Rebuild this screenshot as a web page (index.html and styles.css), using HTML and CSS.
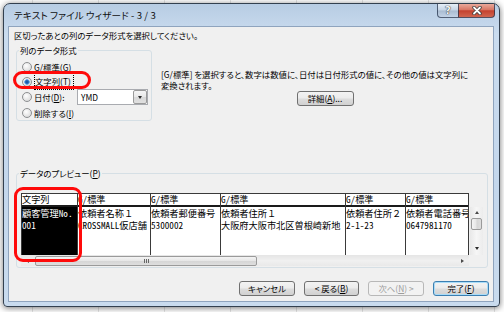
FILE: index.html
```html
<!DOCTYPE html>
<html lang="ja">
<head>
    <meta charset="UTF-8">
    <meta name="viewport" content="width=device-width, initial-scale=1.0">
    <title>テキスト ファイル ウィザード - 3 / 3</title>
    <link rel="stylesheet" href="styles.css">
</head>
<body>
<div class="desk">
    <!-- Dialog window -->
    <div class="window">
        <div class="titlebar">
            <span class="title">テキスト ファイル ウィザード - 3 / 3</span>
            <div class="caption-btns">
                <span class="cap-btn help">?</span>
                <span class="cap-btn close">
                    <svg width="10" height="9" viewBox="0 0 10 9">
                        <path d="M2 1.5 L8 7.5 M8 1.5 L2 7.5" stroke="#3b3b3b" stroke-width="3.4" stroke-linecap="round"/>
                        <path d="M2 1.5 L8 7.5 M8 1.5 L2 7.5" stroke="#fff" stroke-width="1.8" stroke-linecap="round"/>
                    </svg>
                </span>
            </div>
        </div>

        <div class="client">
            <p class="lead">区切ったあとの列のデータ形式を選択してください。</p>

            <div class="format-row">
                <fieldset class="group format">
                    <legend>列のデータ形式</legend>
                    <label class="opt"><span class="radio"></span>G/標準(<u>G</u>)</label>
                    <label class="opt"><span class="radio on"></span><span class="focus">文字列(<u>T</u>)</span></label>
                    <label class="opt date"><span class="radio"></span>日付(<u>D</u>):
                        <span class="combo">YMD<span class="drop"><i class="tri-down"></i></span></span>
                    </label>
                    <label class="opt"><span class="radio"></span>削除する(<u>I</u>)</label>
                </fieldset>
                <div class="hint">
                    <p>[G/標準] を選択すると、数字は数値に、日付は日付形式の値に、その他の値は文字列に<br>変換されます。</p>
                    <button class="btn detail">詳細(<u>A</u>)...</button>
                </div>
            </div>

            <!-- Preview -->
            <fieldset class="group preview-group">
                <legend>データのプレビュー(<u>P</u>)</legend>
                <div class="preview">
                    <div class="grid-area">
                        <div class="grid">
                            <div class="col c1 sel">
                                <div class="hd">文字列</div>
                                <div class="cell">顧客管理No.</div>
                                <div class="cell">001</div>
                            </div>
                            <div class="col c2">
                                <div class="hd">G/標準</div>
                                <div class="cell">依頼者名称１</div>
                                <div class="cell">CROSSMALL仮店舗</div>
                            </div>
                            <div class="col c3">
                                <div class="hd">G/標準</div>
                                <div class="cell">依頼者郵便番号</div>
                                <div class="cell">5300002</div>
                            </div>
                            <div class="col c4">
                                <div class="hd">G/標準</div>
                                <div class="cell">依頼者住所１</div>
                                <div class="cell">大阪府大阪市北区曽根崎新地</div>
                            </div>
                            <div class="col c5">
                                <div class="hd">G/標準</div>
                                <div class="cell">依頼者住所２</div>
                                <div class="cell">2-1-23</div>
                            </div>
                            <div class="col c6">
                                <div class="hd">G/標準</div>
                                <div class="cell">依頼者電話番号</div>
                                <div class="cell">0647981170</div>
                            </div>
                        </div>
                        <div class="hscroll">
                            <span class="arrow"><i class="tri-left"></i></span>
                            <span class="thumb h-thumb"><i class="grip"></i></span>
                            <span class="arrow right"><i class="tri-right"></i></span>
                        </div>
                    </div>
                    <div class="vscroll">
                        <span class="arrow up"><i class="tri-up"></i></span>
                        <span class="thumb v-thumb"></span>
                        <span class="arrow down"><i class="tri-down"></i></span>
                    </div>
                </div>
            </fieldset>

            <div class="buttons">
                <button class="btn">キャンセル</button>
                <button class="btn">&lt; 戻る(<u>B</u>)</button>
                <button class="btn" disabled>次へ(<u>N</u>) &gt;</button>
                <button class="btn default">完了(<u>F</u>)</button>
            </div>
        </div>
    </div>

    <!-- Red annotation marks -->
    <div class="mark mark-type"></div>
    <div class="mark mark-col"></div>
</div>
</body>
</html>
```

FILE: styles.css
```css
/* General */
* {
    box-sizing: border-box;
}
body {
    margin: 0;
    font-family: "Noto Sans CJK JP", sans-serif;
    font-size: 8.4px;
    font-feature-settings: "palt";
    color: #000;
    background-color: #fff;
    background-image: linear-gradient(90deg, #e4e4e4 1px, transparent 1px);
    background-size: 66px 100%;
    background-position: 32px 0;
}
u {
    text-decoration: underline;
    text-underline-offset: 1px;
}
.desk {
    position: relative;
    width: 504px;
    height: 312px;
    padding: 3px 4px 5px 3px;
}

/* Window frame */
.window {
    height: 304px;
    border: 1px solid #33404f;
    border-radius: 7px 7px 4px 4px;
    background: linear-gradient(180deg, #b7cce3 0%, #cadcef 10%, #c4d7ec 60%, #c9dbee 100%);
    padding: 0 5px 4px 4px;
    display: flex;
    flex-direction: column;
    box-shadow: 0 1px 6px rgba(0, 0, 0, 0.55);
}
.titlebar {
    height: 22px;
    display: flex;
    align-items: center;
    padding-left: 6px;
}
.title {
    font-size: 9.6px;
    color: #101010;
    letter-spacing: 0.1px;
}
.caption-btns {
    margin-left: auto;
    margin-right: -1px;
    align-self: flex-start;
    display: flex;
}
.cap-btn {
    height: 14px;
    display: flex;
    align-items: center;
    justify-content: center;
    border: 1px solid rgba(35, 50, 75, 0.75);
    border-top: none;
}
.help {
    width: 21px;
    border-right: none;
    border-radius: 0 0 0 4px;
    background: linear-gradient(180deg, #e6eef7 0%, #c5d4e5 48%, #a9bbd0 52%, #c3d3e6 100%);
    color: #f4f4f4;
    font-family: "DejaVu Sans", sans-serif;
    font-weight: bold;
    font-size: 10px;
    text-shadow: 0 0 1px #333, 0 0 1px #333;
}
.close {
    width: 37px;
    border-radius: 0 0 4px 0;
    background: linear-gradient(180deg, #e9a99b 0%, #d87664 45%, #c4412e 52%, #d0654f 100%);
}

/* Client area */
.client {
    flex: 1;
    background: #f0f0f0;
    border: 1px solid #8fa4be;
    padding: 3px 4px 0 7px;
    display: flex;
    flex-direction: column;
}
.lead {
    margin: 0 0 0 -2px;
    line-height: 11px;
    height: 11px;
}
.format-row {
    display: flex;
    margin-top: 4px;
}

/* Group boxes */
.group {
    margin: 0;
    border: 1px solid #d5dfe5;
    border-radius: 3px;
    min-width: 0;
}
.group legend {
    padding: 0 1px;
    line-height: 11px;
}
.format {
    width: 136px;
    flex: none;
    padding: 3px 3px 0 5px;
}
.format legend {
    margin-left: -3px;
}
.opt {
    display: flex;
    align-items: center;
    height: 15px;
}
.opt.date {
    height: 16px;
}
.radio {
    width: 10px;
    height: 10px;
    flex: none;
    border-radius: 50%;
    border: 1px solid #8d8f91;
    background: radial-gradient(circle at 40% 35%, #ffffff 0%, #e4e4e4 60%, #d0d0d0 100%);
    margin-right: 2px;
}
.radio.on {
    background: radial-gradient(circle at 50% 50%, #15498f 0, #2c6fc0 1.6px, #7db4ea 2.6px, transparent 3px),
                radial-gradient(circle at 40% 35%, #ffffff 0%, #e4e4e4 60%, #d0d0d0 100%);
}
.focus {
    border: 1px dotted #000;
    padding: 2px 2px 2px 0;
    line-height: 11px;
}
.combo {
    margin-left: auto;
    width: 71px;
    height: 16px;
    border: 1px solid #a9abb0;
    background: #fff;
    display: flex;
    align-items: center;
    padding-left: 3px;
}
.drop {
    margin-left: auto;
    width: 14px;
    height: 14px;
    border: 1px solid #9a9a9a;
    border-radius: 2px;
    background: linear-gradient(180deg, #f5f5f5 0%, #e8e8e8 50%, #d8d8d8 51%, #e0e0e0 100%);
    display: flex;
    align-items: center;
    justify-content: center;
}
.hint {
    flex: 1;
    padding: 24px 0 0 9px;
    display: flex;
    flex-direction: column;
    align-items: center;
}
.hint p {
    align-self: flex-start;
    margin: 0;
    line-height: 11px;
    white-space: nowrap;
}

/* Buttons */
.btn {
    height: 15px;
    width: 56px;
    padding: 0;
    font: inherit;
    line-height: 13px;
    color: #000;
    border: 1px solid #707070;
    border-radius: 3px;
    background: linear-gradient(180deg, #f3f3f3 0%, #ebebeb 48%, #dddddd 52%, #d1d1d1 100%);
}
.btn.detail {
    width: 57px;
}
.btn:disabled {
    color: #9d9d9d;
    border-color: #b8b8b8;
    background: #f2f2f2;
}
.btn.default {
    border-color: #3c7fb1;
    box-shadow: inset 0 0 0 1px #a9dcf8;
}
.buttons {
    display: flex;
    justify-content: flex-end;
    gap: 9px;
    margin-top: 13px;
}
.buttons .btn:nth-child(2) {
    width: 55px;
}

/* Preview grid */
.preview-group {
    margin: 47px 1px 0 0;
    padding: 14px 4px 1px 4px;
}
.preview-group legend {
    margin-left: -2px;
}
.preview {
    display: flex;
    height: 73px;
}
.grid-area {
    width: 448px;
    display: flex;
    flex-direction: column;
}
.grid {
    height: 62px;
    display: flex;
    overflow-x: clip;
    background: #fff;
    border-top: 1px solid #3a3a3a;
    border-left: 1px solid #3a3a3a;
    font-family: "Noto Sans Mono CJK JP", "Noto Sans CJK JP", monospace;
    font-size: 9.2px;
    font-feature-settings: normal;
}
.col {
    flex: none;
    overflow-x: clip;
    white-space: nowrap;
    border-right: 1px solid #3a3a3a;
}
.hd {
    height: 13px;
    line-height: 11px;
    background: #fff;
    border-bottom: 2px solid #1a1a1a;
}
.cell {
    height: 12px;
    line-height: 12px;
}
.sel {
    background: #000;
    color: #fff;
}
.sel .hd {
    color: #000;
}
.c1 { width: 56px; }
.c2 { width: 73px; }
.c3 { width: 70px; }
.c4 { width: 125px; }
.c5 { width: 60px; }
.c6 { width: 63px; }

/* Scrollbars */
.hscroll {
    height: 11px;
    display: flex;
    align-items: center;
    background: linear-gradient(180deg, #e5e5e5 0%, #f0f0f0 50%, #e9e9e9 100%);
}
.arrow {
    width: 13px;
    height: 11px;
    flex: none;
    display: flex;
    align-items: center;
    justify-content: center;
}
.arrow.right {
    margin-left: auto;
}
.thumb {
    border: 1px solid #9a9a9a;
    border-radius: 2px;
    background: linear-gradient(180deg, #f4f4f4 0%, #e6e6e6 48%, #d6d6d6 52%, #dedede 100%);
    display: flex;
    align-items: center;
    justify-content: center;
}
.h-thumb {
    width: 222px;
    height: 10px;
    margin-left: 1px;
}
.grip {
    width: 5px;
    height: 4px;
    background: repeating-linear-gradient(90deg, #666 0 1px, transparent 1px 2px);
}
.vscroll {
    width: 13px;
    height: 48px;
    margin: 14px 0 0 1px;
    display: flex;
    flex-direction: column;
    background: linear-gradient(90deg, #e8e8e8 0%, #f6f6f6 50%, #ececec 100%);
}
.vscroll .arrow.up {
    height: 11px;
}
.v-thumb {
    height: 12px;
    margin: 0 1px;
    background: linear-gradient(90deg, #f4f4f4 0%, #e6e6e6 48%, #d6d6d6 52%, #dedede 100%);
}
.vscroll .arrow.down {
    margin-top: auto;
    height: 13px;
}
.tri-left, .tri-right, .tri-up, .tri-down {
    display: block;
    width: 0;
    height: 0;
}
.tri-left {
    border-top: 2.5px solid transparent;
    border-bottom: 2.5px solid transparent;
    border-right: 3px solid #4a4a4a;
}
.tri-right {
    border-top: 2.5px solid transparent;
    border-bottom: 2.5px solid transparent;
    border-left: 3px solid #4a4a4a;
}
.tri-up {
    border-left: 2.5px solid transparent;
    border-right: 2.5px solid transparent;
    border-bottom: 3px solid #4a4a4a;
}
.tri-down {
    border-left: 2.5px solid transparent;
    border-right: 2.5px solid transparent;
    border-top: 3px solid #2a2a2a;
}

/* Red annotation marks */
.mark {
    position: absolute;
    border: 3px solid #ff0a0a;
    border-radius: 9px;
}
.mark-type {
    left: 13px;
    top: 71px;
    width: 78px;
    height: 18px;
}
.mark-col {
    left: 14px;
    top: 187px;
    width: 68px;
    height: 75px;
}
```
